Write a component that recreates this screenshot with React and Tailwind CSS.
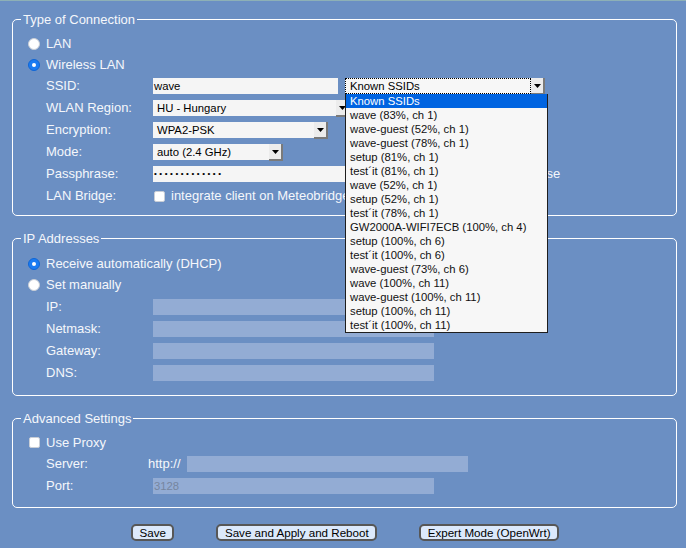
import React from "react";

const ssids = [
  "wave (83%, ch 1)",
  "wave-guest (52%, ch 1)",
  "wave-guest (78%, ch 1)",
  "setup (81%, ch 1)",
  "test´it (81%, ch 1)",
  "wave (52%, ch 1)",
  "setup (52%, ch 1)",
  "test´it (78%, ch 1)",
  "GW2000A-WIFI7ECB (100%, ch 4)",
  "setup (100%, ch 6)",
  "test´it (100%, ch 6)",
  "wave-guest (73%, ch 6)",
  "wave (100%, ch 11)",
  "wave-guest (100%, ch 11)",
  "setup (100%, ch 11)",
  "test´it (100%, ch 11)",
];

function Radio({ checked, label, h = "h-[21px]" }) {
  return (
    <div className={`flex items-center ${h} pl-[7px]`}>
      {checked ? (
        <span className="flex items-center justify-center w-[12px] h-[12px] rounded-full bg-[#1a7bf2] border border-[#0f66d6]">
          <span className="w-[4px] h-[4px] rounded-full bg-white" />
        </span>
      ) : (
        <span className="w-[12px] h-[12px] rounded-full bg-white border border-[#c9ced6]" />
      )}
      <span className="ml-[6px]">{label}</span>
    </div>
  );
}

function Checkbox() {
  return <span className="inline-block w-[11px] h-[11px] rounded-[2px] bg-white border border-[#c9ced6]" />;
}

function Row({ label, children, h = "h-[22px]", labelW = "w-[107px]" }) {
  return (
    <div className={`flex items-center ${h} pl-[25px]`}>
      <span className={`${labelW} shrink-0`}>{label}</span>
      {children}
    </div>
  );
}

function Arrow() {
  return (
    <span className="flex items-center justify-center w-[14px] h-[17px] -mb-px bg-[#ececec] border-r-[2px] border-b-[2px] border-[#7a7a7a]">
      <svg width="7" height="4" viewBox="0 0 7 4">
        <path d="M0 0h7L3.5 4z" fill="#000" />
      </svg>
    </span>
  );
}

function Select({ value, w }) {
  return (
    <div className={`flex items-start h-[16px] ${w} bg-[#f5f5f5] text-[11.3px] text-black`}>
      <span className="flex-1 pl-[4px] leading-[16px] whitespace-nowrap overflow-hidden">{value}</span>
      <Arrow />
    </div>
  );
}

function TextInput({ w = "w-[281px]", disabled, children }) {
  return (
    <div
      className={`h-[16px] ${w} ${
        disabled ? "bg-[#93acd4] text-[#76869f]" : "bg-[#f5f5f5] text-black"
      } text-[11.3px] leading-[16px] pl-[1px]`}
    >
      {children}
    </div>
  );
}

function Legend({ children }) {
  return <legend className="ml-0 px-[2px] text-[13px] leading-[15px]">{children}</legend>;
}

function Button({ children }) {
  return (
    <button className="h-[17px] px-[6.5px] leading-[13px] bg-[#dce9fb] border-2 border-[#575757] rounded-[5px]">
      {children}
    </button>
  );
}

export default function App() {
  return (
    <div className="min-h-[548px] bg-[#6b8fc3] text-[#f5f7fb] text-[13px] font-['Liberation_Sans',Arial,sans-serif]">
      <div className="h-px bg-[#8db0b6]" />
      <div className="pl-[12px] pr-[9px] pt-[11px]">
        {/* Type of Connection */}
        <fieldset className="border border-white rounded-[5px] pl-[8px] pr-[8px] pt-[6px] pb-[8px]">
          <Legend>Type of Connection</Legend>
          <Radio label="LAN" />
          <Radio checked label="Wireless LAN" />
          <Row label="SSID:">
            <TextInput w="w-[185px]">wave</TextInput>
            <div className="relative ml-[7px]">
              <div className="flex items-start h-[16px] w-[200px] bg-[#f7f7f7] text-[11.3px] text-black">
                <span className="flex-1 h-[16px] pl-[4px] leading-[14px] border border-dotted border-black whitespace-nowrap">
                  Known SSIDs
                </span>
                <Arrow />
              </div>
              <ul className="absolute left-0 top-[16px] z-10 w-[203px] bg-[#f7f7f7] border border-t-0 border-[#1e1e1e] text-[11.3px] text-[#111]">
                <li className="h-[14px] leading-[14px] pl-[4px] bg-[#0064e1] text-white">Known SSIDs</li>
                {ssids.map((s, i) => (
                  <li key={i} className="h-[14px] leading-[14px] pl-[4px] whitespace-nowrap">
                    {s}
                  </li>
                ))}
              </ul>
            </div>
          </Row>
          <Row label="WLAN Region:">
            <Select value="HU - Hungary" w="w-[197px]" />
          </Row>
          <Row label="Encryption:">
            <Select value="WPA2-PSK" w="w-[175px]" />
          </Row>
          <Row label="Mode:">
            <Select value="auto (2.4 GHz)" w="w-[130px]" />
          </Row>
          <Row label="Passphrase:">
            <div className="h-[16px] w-[200px] bg-[#f5f5f5] text-black pl-[1px] flex items-center">
              <span className="text-[8px] tracking-[2.55px] leading-none">•••••••••••••</span>
            </div>
            <span className="ml-[89px] flex items-center gap-[6px]">
              <Checkbox />
              show passphrase
            </span>
          </Row>
          <Row label="LAN Bridge:">
            <span className="flex items-center gap-[6px] pl-[1px]">
              <Checkbox />
              integrate client on Meteobridge
            </span>
          </Row>
        </fieldset>

        {/* IP Addresses */}
        <fieldset className="mt-[15px] border border-white rounded-[5px] pl-[8px] pr-[8px] pt-[7px] pb-[11px]">
          <Legend>IP Addresses</Legend>
          <Radio checked label="Receive automatically (DHCP)" />
          <Radio label="Set manually" h="h-[22px]" />
          <Row label="IP:">
            <TextInput disabled />
          </Row>
          <Row label="Netmask:">
            <TextInput disabled />
          </Row>
          <Row label="Gateway:">
            <TextInput disabled />
          </Row>
          <Row label="DNS:">
            <TextInput disabled />
          </Row>
        </fieldset>

        {/* Advanced Settings */}
        <fieldset className="mt-[15px] border border-white rounded-[5px] pl-[8px] pr-[8px] pt-[6px] pb-[10px]">
          <Legend>Advanced Settings</Legend>
          <div className="flex items-center h-[21px] pl-[8px]">
            <Checkbox />
            <span className="ml-[6px]">Use Proxy</span>
          </div>
          <Row label="Server:" labelW="w-[102px]">
            <span className="w-[39px] shrink-0">http://</span>
            <TextInput disabled />
          </Row>
          <Row label="Port:">
            <TextInput disabled>3128</TextInput>
          </Row>
        </fieldset>
      </div>

      <div className="flex justify-center gap-[42px] pl-[4px] mt-[16px] text-[11.6px] text-black">
        <Button>Save</Button>
        <Button>Save and Apply and Reboot</Button>
        <Button>Expert Mode (OpenWrt)</Button>
      </div>
    </div>
  );
}
